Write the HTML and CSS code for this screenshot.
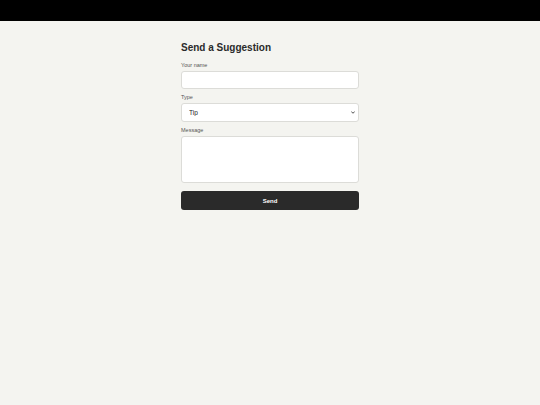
FILE: index.html
```html
<!DOCTYPE html>
<html lang="en">
<head>
<meta charset="utf-8">
<title>Send a Suggestion</title>
<link rel="stylesheet" href="styles.css">
</head>
<body>
<header class="topbar"></header>
<main class="page">
  <form class="form">
    <h1 class="title">Send a Suggestion</h1>
    <label class="field">
      <span class="label">Your name</span>
      <input class="control" type="text">
    </label>
    <label class="field">
      <span class="label">Type</span>
      <span class="select-wrap">
        <select class="control select">
          <option>Tip</option>
          <option>Idea</option>
          <option>Bug</option>
        </select>
        <svg class="chevron" viewBox="0 0 8 5" width="4" height="3" aria-hidden="true"><path d="M1 1l3 3 3-3" fill="none" stroke="#222" stroke-width="1.6" stroke-linecap="round" stroke-linejoin="round"/></svg>
      </span>
    </label>
    <label class="field">
      <span class="label">Message</span>
      <textarea class="control area"></textarea>
    </label>
    <button class="send" type="button">Send</button>
  </form>
</main>
</body>
</html>
```

FILE: styles.css
```css
* { box-sizing: border-box; }
html, body { margin: 0; padding: 0; }
body {
  background: #f4f4f0;
  font-family: "Liberation Sans", Arial, sans-serif;
  color: #222;
  height: 405px;
}
.topbar {
  height: 21px;
  background: #000;
}
.page {
  display: flex;
  justify-content: center;
  padding-top: 20px;
}
.form {
  width: 178px;
  display: flex;
  flex-direction: column;
}
.title {
  margin: 0 0 8px;
  font-size: 10px;
  line-height: 13px;
  font-weight: 700;
  color: #2a2a2a;
}
.field {
  display: flex;
  flex-direction: column;
  margin-bottom: 5px;
}
.label {
  font-size: 5.5px;
  line-height: 6px;
  color: #555;
  margin-bottom: 3px;
}
.control {
  height: 18px;
  width: 100%;
  border: 1px solid #dcdcd8;
  border-radius: 3px;
  background: #fff;
  font-family: inherit;
  font-size: 6.5px;
  padding: 0 7px;
  color: #222;
  -webkit-text-fill-color: #222;
  outline: none;
  margin: 0;
  display: block;
}
.select-wrap {
  position: relative;
  display: block;
}
.select {
  appearance: none;
  -webkit-appearance: none;
  height: 19px;
}
.chevron {
  position: absolute;
  right: 4px;
  top: 8px;
  pointer-events: none;
}
.area {
  height: 47px;
  resize: none;
}
.send {
  margin-top: 3px;
  height: 19px;
  border: none;
  border-radius: 3px;
  background: #2a2a2a;
  color: #fff;
  font-family: inherit;
  font-size: 6px;
  font-weight: 700;
}
```
